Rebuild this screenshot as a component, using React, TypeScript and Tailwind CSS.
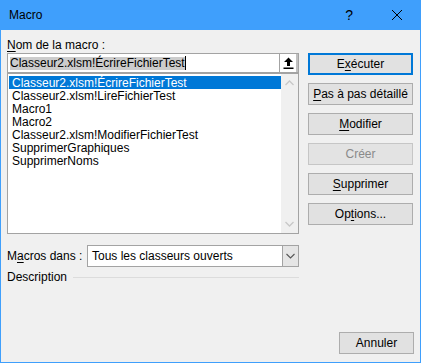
import React from "react";

const F = { fontFamily: '"Liberation Sans", Arial, sans-serif' };

function Btn({ children, primary, disabled }: { children: React.ReactNode; primary?: boolean; disabled?: boolean }) {
  return (
    <div
      className={
        "h-[22px] w-full flex items-center justify-center text-[12px] leading-none " +
        (primary
          ? "border-2 border-[#0078d7] bg-[#e1e1e1] text-black"
          : disabled
          ? "border border-[#c6c6c6] bg-[#e3e3e3] text-[#8a8a8a]"
          : "border border-[#adadad] bg-[#e1e1e1] text-black")
      }
    >
      {children}
    </div>
  );
}

const U = ({ c }: { c: string }) => <span className="underline underline-offset-2">{c}</span>;

const items = [
  "Classeur2.xlsm!ÉcrireFichierTest",
  "Classeur2.xlsm!LireFichierTest",
  "Macro1",
  "Macro2",
  "Classeur2.xlsm!ModifierFichierTest",
  "SupprimerGraphiques",
  "SupprimerNoms",
];

export default function App() {
  return (
    <div className="w-[421px] h-[363px] flex flex-col border-x border-b border-[#3f9ffc] bg-[#f0f0f0] text-black" style={F}>
      <div className="h-[30px] shrink-0 bg-[#3f9ffc] flex items-center pl-[8px] text-[12px]">
        <span className="flex-1">Macro</span>
        <span className="text-[14px] mr-[38px]">?</span>
        <svg width="12" height="12" viewBox="0 0 12 12" className="mr-[17px]">
          <path d="M1 1 L11 11 M11 1 L1 11" stroke="#000" strokeWidth="1" />
        </svg>
      </div>
      <div className="flex-1 flex flex-col pl-[6px] pr-[6px]">
        <div className="flex gap-[9px]">
          <div className="w-[292px] flex flex-col pt-[7px]">
            <div className="h-[16px] text-[12px] leading-[16px] flex items-center">
              <span><U c="N" />om de la macro :</span>
            </div>
            <div className="h-[20px] flex border border-[#a3a3a3] bg-white">
              <div className="flex-1 flex items-center pl-[2px]">
                <span className="bg-[#cccccc] text-[12px] leading-[13px] h-[13px]">Classeur2.xlsm!ÉcrireFichierTest</span>
                <span className="w-px h-[14px] bg-black"></span>
              </div>
              <div className="w-[19px] border-l border-[#a3a3a3] flex items-center justify-center border-r-[2px] border-r-[#c0c0c0]">
                <svg width="11" height="12" viewBox="0 0 11 12">
                  <path d="M5.5 0.5 L10 5 L7 5 L7 9 L4 9 L4 5 L1 5 Z" fill="#000" />
                  <rect x="0.5" y="10.5" width="10" height="1.5" fill="#000" />
                </svg>
              </div>
            </div>
            <div className="h-[161px] border border-[#a3a3a3] bg-white flex">
              <div className="flex-1 pt-[2px] pl-[1px]">
                {items.map((t, i) => (
                  <div
                    key={t}
                    className={
                      "h-[13px] flex items-center pl-[3px] text-[12px] leading-none " +
                      (i === 0 ? "bg-[#0078d7] text-white" : "")
                    }
                  >
                    {t}
                  </div>
                ))}
              </div>
              <div className="w-[17px] bg-[#f0f0f0] flex flex-col justify-between items-center py-[6px]">
                <svg width="9" height="6" viewBox="0 0 9 6">
                  <path d="M0.5 5 L4.5 1 L8.5 5" stroke="#c8c8c8" strokeWidth="1.3" fill="none" />
                </svg>
                <svg width="9" height="6" viewBox="0 0 9 6">
                  <path d="M0.5 1 L4.5 5 L8.5 1" stroke="#c8c8c8" strokeWidth="1.3" fill="none" />
                </svg>
              </div>
            </div>
            <div className="mt-[11px] h-[22px] flex items-center">
              <div className="w-[80px] text-[12px]">M<U c="a" />cros dans :</div>
              <div className="flex-1 h-full flex border border-[#a3a3a3] bg-white">
                <div className="flex-1 flex items-center pl-[4px] text-[12px]">Tous les classeurs ouverts</div>
                <div className="w-[16px] bg-[#e5e5e5] border-l border-[#a3a3a3] flex items-center justify-center">
                  <svg width="9" height="6" viewBox="0 0 9 6">
                    <path d="M0.5 1 L4.5 5 L8.5 1" stroke="#555" strokeWidth="1.1" fill="none" />
                  </svg>
                </div>
              </div>
            </div>
            <div className="mt-[3px] h-[14px] flex items-center gap-[6px]">
              <span className="text-[12px]">Description</span>
              <div className="flex-1 h-px bg-[#dcdcdc]"></div>
            </div>
          </div>
          <div className="w-[105px] flex flex-col gap-[8px] pt-[23px]">
            <Btn primary>E<U c="x" />écuter</Btn>
            <Btn><U c="P" />as à pas détaillé</Btn>
            <Btn><U c="M" />odifier</Btn>
            <Btn disabled>Créer</Btn>
            <Btn><U c="S" />upprimer</Btn>
            <Btn>Op<U c="t" />ions...</Btn>
          </div>
        </div>
        <div className="flex-1"></div>
        <div className="flex justify-end pb-[8px]">
          <div className="w-[75px]">
            <Btn>Annuler</Btn>
          </div>
        </div>
      </div>
    </div>
  );
}
